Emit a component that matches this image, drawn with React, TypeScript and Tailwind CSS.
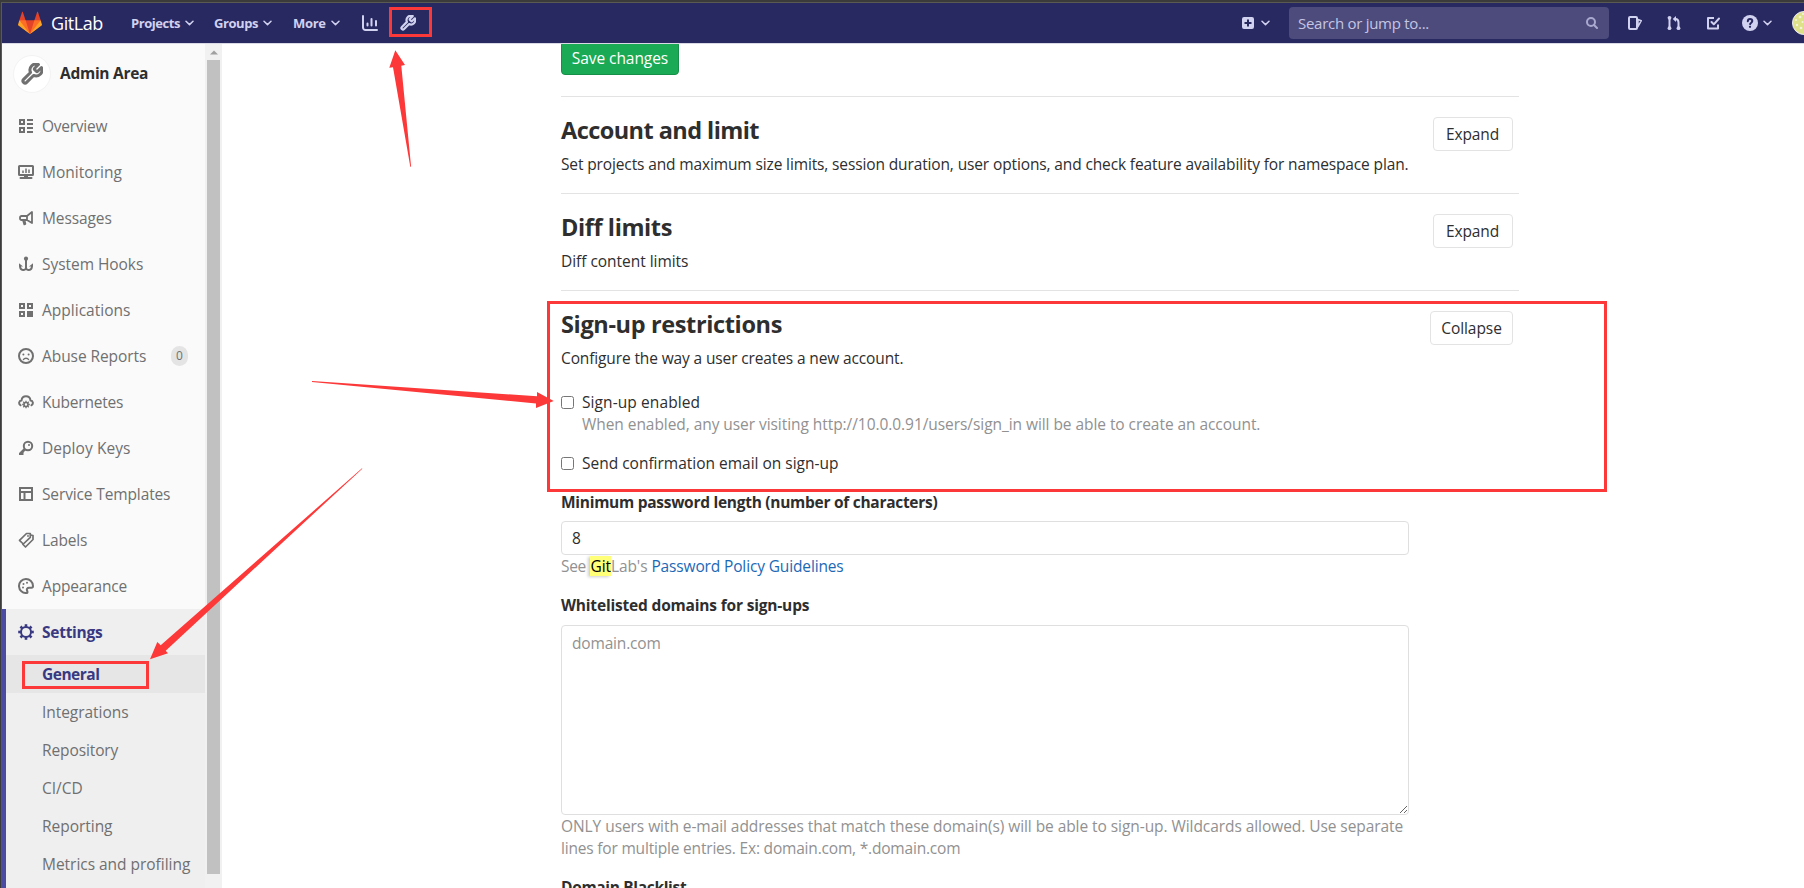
import React from 'react';

type IconProps = { className?: string };

const Svg = ({ className = 'size-4', children }: React.PropsWithChildren<IconProps>) => (
  <svg viewBox="0 0 16 16" className={`shrink-0 ${className}`} fill="none" stroke="currentColor" strokeWidth="2">
    {children}
  </svg>
);

const Tanuki = () => (
  <svg viewBox="0 0 36 36" className="size-6 shrink-0">
    <path fill="#e24329" d="M2 14l9.38 9v-9l-4-12.28c-.205-.632-1.176-.632-1.38 0z" />
    <path fill="#e24329" d="M34 14l-9.38 9v-9l4-12.28c.205-.632 1.176-.632 1.38 0z" />
    <path fill="#e24329" d="M18 34.38L3 14h30z" />
    <path fill="#fc6d26" d="M18 34.38L11.38 14H2l4 11z" />
    <path fill="#fc6d26" d="M18 34.38L24.62 14H34l-4 11z" />
    <path fill="#fca326" d="M2 14L.1 20.16c-.18.565 0 1.2.5 1.56l17.42 12.66z" />
    <path fill="#fca326" d="M34 14l1.9 6.16c.18.565 0 1.2-.5 1.56L18 34.38z" />
  </svg>
);

const Wrench = ({ className = 'size-4' }: IconProps) => (
  <svg viewBox="1 1 22 22" className={`shrink-0 ${className}`} fill="none" stroke="currentColor" strokeWidth="3" strokeLinejoin="round">
    <path d="M14.7 6.3a1 1 0 0 0 0 1.4l1.6 1.6a1 1 0 0 0 1.4 0l3.77-3.77a6 6 0 0 1-7.94 7.94l-6.91 6.91a2.12 2.12 0 0 1-3-3l6.91-6.91a6 6 0 0 1 7.94-7.94l-3.76 3.76z" />
  </svg>
);

const Chevron = ({ className = '' }: IconProps) => (
  <svg viewBox="0 0 9 6" className={`h-1.5 w-[9px] shrink-0 ${className}`} fill="none" stroke="currentColor" strokeWidth="1.5" strokeLinecap="round" strokeLinejoin="round">
    <path d="M1 1.2l3.5 3.4L8 1.2" />
  </svg>
);

const Chart = () => (
  <Svg>
    <path strokeLinecap="round" d="M1 1v11.5A2.5 2.5 0 0 0 3.500 15H15" />
    <path strokeLinecap="round" d="M5.500 8.500v2M9.500 4v6.500M14 6v4.500" />
  </Svg>
);

const Plus = () => (
  <svg viewBox="0 0 12 12" className="size-3 shrink-0">
    <path fill="currentColor" fillRule="evenodd" d="M2 0h8a2 2 0 0 1 2 2v8a2 2 0 0 1-2 2H2a2 2 0 0 1-2-2V2a2 2 0 0 1 2-2zm3 2.500V5H2.500v2H5v2.500h2V7h2.500V5H7V2.500z" />
  </svg>
);

const Search = () => (
  <svg viewBox="0 0 12 12" className="size-3 shrink-0" fill="none" stroke="currentColor" strokeWidth="2">
    <circle cx="5" cy="5" r="4" />
    <path strokeLinecap="round" d="M8 8l3 3" />
  </svg>
);

const Issues = () => (
  <Svg>
    <rect x="2" y="2" width="8" height="12" rx="1" />
    <path strokeWidth="1.500" strokeLinejoin="round" d="M11 4.500l3.300 1.200-3.300 6z" />
  </Svg>
);

const MergeRequest = () => (
  <Svg>
    <path d="M3.500 3v10M12.500 13V7.500c0-2-.8-3.500-3-3.500" />
    <g fill="currentColor" stroke="none">
      <circle cx="3.500" cy="2.800" r="1.900" />
      <circle cx="3.500" cy="13.200" r="1.900" />
      <circle cx="12.500" cy="13.200" r="1.900" />
      <path d="M10 1v6L6.700 4z" />
    </g>
  </Svg>
);

const Todo = () => (
  <Svg>
    <path strokeLinejoin="round" d="M9 3H3v10.500h10V9.500" />
    <path strokeLinecap="round" strokeLinejoin="round" d="M6.500 7l2.300 2.300L14 3.500" />
  </Svg>
);

const Help = () => (
  <svg viewBox="0 0 16 16" className="size-4 shrink-0">
    <circle cx="8" cy="8" r="8" fill="currentColor" />
    <path fill="none" stroke="#292961" strokeWidth="2" strokeLinecap="round" d="M5.800 6.200c.1-1.400 1-2.100 2.200-2.100 1.300 0 2.300.8 2.300 2 0 1.500-1.700 1.500-2.200 3" />
    <circle cx="8" cy="11.800" r="1.150" fill="#292961" />
  </svg>
);

const Overview = () => (
  <Svg>
    <rect x="2" y="2" width="4" height="4" />
    <rect x="2" y="10" width="4" height="4" />
    <path d="M9 2h6M9 6h6M9 10h6M9 14h6" />
  </Svg>
);

const Monitor = () => (
  <Svg>
    <rect x="1" y="2" width="14" height="9" rx=".5" />
    <path d="M2.500 14h11" strokeLinecap="round" />
    <path d="M8 11v3" strokeWidth="4" />
    <path strokeWidth="1.500" d="M5 6.500V9M8 4.500V9M11 5.500V9" />
  </Svg>
);

const Messages = () => (
  <Svg>
    <path strokeWidth="1.800" strokeLinejoin="round" d="M14 2v11L9 10H3.500A1.500 1.500 0 0 1 2 8.500v-1A1.500 1.500 0 0 1 3.500 6H9zM9 6v4" />
    <path strokeLinejoin="round" d="M5 10.500l1.200 4 1.300-.5-.8-3.500" strokeWidth="1.500" />
  </Svg>
);

const Hook = () => (
  <Svg>
    <path d="M8 2.500v10M2 9.500C2 15.500 8 15 8 11.500C8 15 14 15.500 14 9.500" />
    <circle cx="8" cy="2.700" r="2.100" fill="currentColor" stroke="none" />
    <path fill="currentColor" stroke="none" d="M1 7.200l4 3.300H1zM15 7.200l-4 3.300h4z" />
  </Svg>
);

const Applications = () => (
  <Svg>
    <rect x="2" y="2" width="4" height="4" />
    <rect x="10" y="2" width="4" height="4" />
    <rect x="2" y="10" width="4" height="4" />
    <rect x="10" y="10" width="4" height="4" fill="currentColor" />
  </Svg>
);

const Frown = () => (
  <Svg>
    <circle cx="8" cy="8" r="7" />
    <path strokeWidth="1.500" strokeLinecap="round" d="M5.500 11.500c.8-1.600 4.200-1.600 5 0" />
    <circle cx="5.400" cy="6.500" r="1" fill="currentColor" stroke="none" />
    <circle cx="10.600" cy="6.500" r="1" fill="currentColor" stroke="none" />
  </Svg>
);

const TEETH = [0, 45, 90, 135, 180, 225, 270, 315];

const CloudGear = () => (
  <Svg>
    <path strokeLinecap="round" d="M2.500 11.300C.3 9.700.9 6.700 3.500 6.400 4.200 1 11.800 1 12.500 6.400c2.600.3 3.200 3.300 1 4.900" />
    <circle cx="8" cy="10.500" r="2" strokeWidth="1.600" />
    {TEETH.map((angle) => (
      <path key={angle} strokeWidth="1.300" d="M8 8.300V6.700" transform={`rotate(${angle} 8 10.500)`} />
    ))}
  </Svg>
);

const Key = () => (
  <Svg>
    <circle cx="10" cy="6" r="4.200" />
    <path d="M7 9l-5 5" strokeWidth="2.600" />
    <path d="M1 14h3.500v-2" />
    <circle cx="11" cy="5" r="1" fill="currentColor" stroke="none" />
  </Svg>
);

const Template = () => (
  <Svg>
    <rect x="2" y="2" width="12" height="12" />
    <path d="M2 6h12M6.500 6v8" />
  </Svg>
);

const Labels = () => (
  <Svg>
    <path strokeWidth="1.700" strokeLinejoin="round" d="M8.500 1.500h3.800v3.800L5.300 12 1.500 8.300z" />
    <path strokeWidth="1.700" strokeLinejoin="round" d="M12.500 3l2.500.5v4L7.500 15 4.500 12" />
    <circle cx="10" cy="4" r=".9" fill="currentColor" stroke="none" />
  </Svg>
);

const Palette = () => (
  <Svg>
    <path strokeLinejoin="round" d="M15 8A7 7 0 1 0 8.500 15C10 15 9.500 13.500 9 12.500c-.5-1.500.3-2.700 2-2.700h2.500C14.500 9.800 15 9 15 8z" />
    <g fill="currentColor" stroke="none">
      <circle cx="5" cy="9.500" r="1" />
      <circle cx="5.500" cy="6" r="1" />
      <circle cx="9" cy="4.700" r="1" />
    </g>
  </Svg>
);

const Gear = () => (
  <Svg>
    <circle cx="8" cy="8" r="5" />
    {TEETH.map((angle) => (
      <path key={angle} strokeWidth="2.600" d="M8 2.800V.2" transform={`rotate(${angle} 8 8)`} />
    ))}
  </Svg>
);

const NAV = [
  { label: 'Overview', Icon: Overview, cls: 'tracking-[-0.25px]' },
  { label: 'Monitoring', Icon: Monitor, cls: 'tracking-[0.02px]' },
  { label: 'Messages', Icon: Messages, cls: 'tracking-[-0.1px]' },
  { label: 'System Hooks', Icon: Hook, cls: 'tracking-[-0.05px]' },
  { label: 'Applications', Icon: Applications, cls: 'tracking-[0.01px]' },
  { label: 'Abuse Reports', Icon: Frown, cls: 'tracking-[-0.07px]', count: '0' },
  { label: 'Kubernetes', Icon: CloudGear, cls: 'tracking-[-0.22px]' },
  { label: 'Deploy Keys', Icon: Key, cls: 'tracking-[0.06px]' },
  { label: 'Service Templates', Icon: Template, cls: 'tracking-[-0.13px]' },
  { label: 'Labels', Icon: Labels, cls: 'tracking-[-0.15px]' },
  { label: 'Appearance', Icon: Palette, cls: 'tracking-[-0.16px]' },
];

const SUB = [
  { label: 'Integrations', cls: 'tracking-[-0.05px]' },
  { label: 'Repository', cls: 'tracking-[-0.11px]' },
  { label: 'CI/CD', cls: '' },
  { label: 'Reporting', cls: 'tracking-[-0.03px]' },
  { label: 'Metrics and profiling', cls: 'tracking-[-0.03px]' },
];

function TopBar() {
  return (
    <header className="flex h-[41px] shrink-0 items-center border-b border-[#d9d9e6] bg-[#292961] text-[#d1d1f0]">
      <div className="ml-4 flex w-[113px] items-center">
        <Tanuki />
        <span className="ml-[9px] text-[18px] leading-6 tracking-[-0.45px] text-white">GitLab</span>
      </div>
      <nav className="flex items-center text-[13px] leading-5 font-bold">
        <div className="flex w-[83px] items-center justify-between pr-5">
          <span className="tracking-[-0.44px]">Projects</span>
          <Chevron />
        </div>
        <div className="flex w-[79px] items-center justify-between pr-[21px]">
          <span className="tracking-[-0.43px]">Groups</span>
          <Chevron />
        </div>
        <div className="flex w-[47px] items-center justify-between">
          <span className="tracking-[-0.3px]">More</span>
          <Chevron />
        </div>
      </nav>
      <div className="ml-[22px]">
        <Chart />
      </div>
      <div className="relative ml-[22px]">
        <Wrench />
        <div className="absolute -top-2 -left-[11px] h-[30px] w-[43px] border-3 border-[#fd3838]" />
      </div>
      <div className="ml-auto flex w-[562px] items-center">
        <Plus />
        <Chevron className="ml-[7px]" />
        <div className="ml-[19px] flex h-8 w-80 items-center justify-between rounded bg-[#4c4b7c] pr-[11px] pl-[9px]">
          <span className="text-[15px] leading-[22px] tracking-[-0.28px] text-[#c5c5e3]">Search or jump to...</span>
          <span className="text-[#a9a9d0]">
            <Search />
          </span>
        </div>
        <div className="ml-[18px]">
          <Issues />
        </div>
        <div className="ml-[23px]">
          <MergeRequest />
        </div>
        <div className="ml-[23px]">
          <Todo />
        </div>
        <div className="ml-[21px]">
          <Help />
        </div>
        <Chevron className="ml-[5px]" />
        <svg viewBox="0 0 12 24" className="ml-auto h-6 w-3 shrink-0">
          <circle cx="12" cy="12" r="11.500" fill="#dfe08a" stroke="#e9e9f2" />
          <g fill="#f4f4dc">
            <circle cx="4" cy="9" r="1" />
            <circle cx="8" cy="6" r="1.300" />
            <circle cx="10.500" cy="11" r="1" />
            <circle cx="5" cy="14" r="1.200" />
            <circle cx="9" cy="17" r="1.300" />
            <circle cx="11" cy="3" r="1" />
          </g>
        </svg>
      </div>
    </header>
  );
}

function Sidebar() {
  return (
    <aside className="flex w-[220px] shrink-0 text-[15.5px] leading-[22px] text-[#707070]">
      <div className="flex w-[203px] flex-col bg-[#fafafa]">
        <div className="flex h-[59px] shrink-0 items-center pl-[11px]">
          <div className="flex size-[38px] items-center justify-center rounded-full border border-[#f3f3f3] bg-white">
            <Wrench className="size-[22px]" />
          </div>
          <span className="mb-px ml-[9px] font-bold tracking-[-0.28px] text-[#2e2e2e]">Admin Area</span>
        </div>
        {NAV.map(({ label, Icon, cls, count }) => (
          <div key={label} className="flex h-[46px] shrink-0 items-center pl-4">
            <Icon />
            <span className={`ml-2 ${cls}`}>{label}</span>
            {count && (
              <span className="mr-[17px] ml-auto flex h-5 w-[17px] items-center justify-center rounded-full bg-[#e4e4e4] text-xs">
                {count}
              </span>
            )}
          </div>
        ))}
        <div className="grow border-l-4 border-[#4b4ba3] bg-[#efefef]">
          <div className="flex h-[46px] items-center pl-3 font-bold text-[#393982]">
            <Gear />
            <span className="ml-2 tracking-[-0.26px]">Settings</span>
          </div>
          <div className="relative flex h-[38px] items-center bg-[#e6e6e6] pl-9 font-bold text-[#393982]">
            <span className="tracking-[-0.5px]">General</span>
            <div className="absolute top-1.5 left-4 h-7 w-[127px] border-3 border-[#fd3838]" />
          </div>
          {SUB.map(({ label, cls }) => (
            <div key={label} className="flex h-[38px] items-center pl-9">
              <span className={`whitespace-nowrap ${cls}`}>{label}</span>
            </div>
          ))}
        </div>
      </div>
      <div className="flex w-[17px] flex-col items-center bg-[#f1f1f1] px-0.5">
        <svg viewBox="0 0 8 5" className="mt-1.5 h-[5px] w-2 shrink-0">
          <path d="M4 .5L8 4.500H0z" fill="#a0a0a0" />
        </svg>
        <div className="mt-[5px] h-[814px] w-[13px] shrink-0 bg-[#c1c1c1]" />
      </div>
    </aside>
  );
}

type SectionProps = React.PropsWithChildren<{
  title: string;
  titleCls: string;
  text: string;
  textCls: string;
  action: string;
  actionCls: string;
}>;

function Section({ title, titleCls, text, textCls, action, actionCls, children }: SectionProps) {
  return (
    <section className="w-[958px] border-t border-[#e3e3e3] pb-[18px]">
      <div className="flex items-start justify-between pr-1.5">
        <div className="pt-[17px]">
          <h4 className={`text-[23.5px] leading-8 font-bold whitespace-nowrap ${titleCls}`}>{title}</h4>
          <p className={`mt-[7px] whitespace-nowrap ${textCls}`}>{text}</p>
        </div>
        <button className={`mt-5 flex h-[34px] items-center justify-center rounded border border-[#e3e3e3] bg-white ${actionCls}`}>
          {action}
        </button>
      </div>
      {children}
    </section>
  );
}

function Check({ label, cls, children }: React.PropsWithChildren<{ label: string; cls: string }>) {
  return (
    <div className="flex items-start">
      <input type="checkbox" className="mt-[5px] size-[13px] shrink-0" />
      <div className="ml-2">
        <p className={cls}>{label}</p>
        {children}
      </div>
    </div>
  );
}

function Content() {
  return (
    <main className="min-w-0 grow overflow-hidden bg-white pl-[339px] text-[15.5px] leading-[22px] text-[#2e2e2e]">
      <button className="-mt-[3px] flex h-[34px] w-[118px] items-center justify-center rounded border border-[#168f48] bg-[#1aaa55] tracking-[-0.07px] text-white">
        Save changes
      </button>
      <div className="mt-[21px]">
        <Section
          title="Account and limit"
          titleCls="tracking-[-0.56px]"
          text="Set projects and maximum size limits, session duration, user options, and check feature availability for namespace plan."
          textCls="tracking-[-0.13px]"
          action="Expand"
          actionCls="w-20 tracking-[-0.1px] pr-px"
        />
        <Section
          title="Diff limits"
          titleCls="tracking-[-0.4px]"
          text="Diff content limits"
          textCls="tracking-[-0.04px]"
          action="Expand"
          actionCls="w-20 tracking-[-0.1px] pr-px"
        />
        <Section
          title="Sign-up restrictions"
          titleCls="tracking-[-0.36px]"
          text="Configure the way a user creates a new account."
          textCls="tracking-[-0.13px]"
          action="Collapse"
          actionCls="w-[83px] tracking-[-0.06px]"
        >
          <div className="mt-[22px] flex w-[848px] flex-col gap-[17px]">
            <Check label="Sign-up enabled" cls="tracking-[0.09px]">
              <p className="tracking-[-0.06px] text-[#919191]">
                When enabled, any user visiting http://10.0.0.91/users/sign_in will be able to create an account.
              </p>
            </Check>
            <Check label="Send confirmation email on sign-up" cls="tracking-[-0.01px]" />
            <div>
              <p className="font-bold tracking-[-0.28px]">Minimum password length (number of characters)</p>
              <input
                defaultValue="8"
                className="mt-2 block h-[34px] w-full rounded border border-[#dfdfdf] bg-white px-2.5"
              />
              <p className="text-[#919191]">
                <span className="tracking-[-0.35px]">See </span>
                <span className="inline-block h-5 bg-[#ffff78] pl-px leading-5 tracking-[-0.1px] text-black shadow-[-2px_1px_3px_rgba(0,0,0,0.2)]">Git</span>
                <span className="tracking-[-0.1px]">Lab&apos;s </span>
                <span className="tracking-[-0.14px] text-[#1b69b6]">Password Policy Guidelines</span>
              </p>
            </div>
            <div>
              <p className="font-bold tracking-[-0.18px]">Whitelisted domains for sign-ups</p>
              <textarea
                placeholder="domain.com"
                className="mt-[9px] block h-[190px] w-full rounded border border-[#dfdfdf] bg-white px-2.5 py-1.5 tracking-[-0.17px] placeholder:text-[#919191]"
              />
              <p className="whitespace-nowrap text-[#919191]">
                <span className="block tracking-[-0.065px]">
                  ONLY users with e-mail addresses that match these domain(s) will be able to sign-up. Wildcards allowed. Use separate
                </span>
                <span className="block tracking-[-0.19px]">lines for multiple entries. Ex: domain.com, *.domain.com</span>
              </p>
            </div>
            <p className="font-bold tracking-[-0.33px]">Domain Blacklist</p>
          </div>
        </Section>
      </div>
    </main>
  );
}

function Annotations() {
  return (
    <>
      <div className="pointer-events-none absolute top-[301px] left-[547px] h-[191px] w-[1060px] border-3 border-[#fd3838]" />
      <svg viewBox="0 0 1804 888" className="pointer-events-none absolute inset-0 h-[888px] w-[1804px]" fill="#fd3838">
        <path d="M395.300 50.300L389.300 67.700l3.700-.4L410.300 166.700h.8L401.300 65.700l3.700-.7z" />
        <path d="M553.700 401L537 392v4.300L312 381v.9L536 403.500v4.500z" />
        <path d="M150 659.300l7.300-17.300 3.400 3.300L362 468.300l.3.400L165.700 650.700l2.300 2.600z" />
      </svg>
    </>
  );
}

export default function App() {
  return (
    <div className="relative h-[888px] w-[1804px] overflow-hidden bg-[#3b3b3b] pt-0.5 pl-px font-['Open_Sans','Noto_Sans',sans-serif]">
      <div className="flex h-full flex-col border-t border-l border-[#5a5952] bg-white">
        <TopBar />
        <div className="flex min-h-0 grow overflow-hidden">
          <Sidebar />
          <Content />
        </div>
      </div>
      <Annotations />
    </div>
  );
}
